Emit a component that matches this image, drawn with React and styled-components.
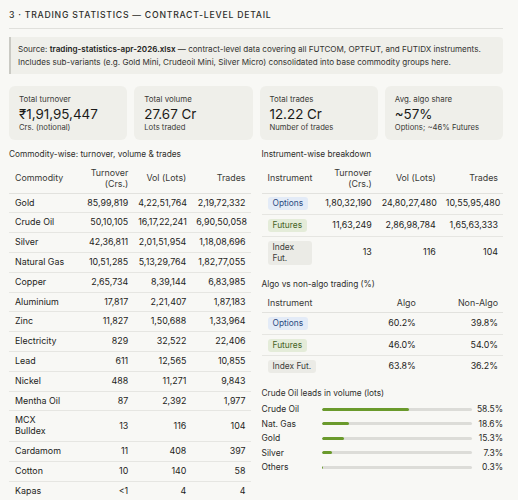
import React from "react";
import styled, { createGlobalStyle } from "styled-components";

const Global = createGlobalStyle`
  html, body { margin: 0; padding: 0; background: #f8f8f5; }
  body { font-family: Inter, "Noto Sans", sans-serif; color: #1d1d1b; -webkit-font-smoothing: antialiased; }
`;

const Page = styled.div`
  width: 494px;
  padding: 9px 15px 0 9px;
`;

const Heading = styled.div`
  font-size: 8.7px;
  font-weight: 500;
  letter-spacing: 0.75px;
  color: #2e2e2b;
  line-height: 12px;
  padding-bottom: 7px;
  border-bottom: 1px solid #e0e0dc;
`;

const SourceBox = styled.div`
  margin-top: 8px;
  background: #efefea;
  border-left: 2px solid #cacac4;
  border-radius: 0 4px 4px 0;
  padding: 6px 8px 5px 7px;
  font-size: 8.1px;
  line-height: 13px;
  color: #333330;
  white-space: nowrap;
  b { font-weight: 600; color: #1d1d1b; }
`;

const Cards = styled.div`
  margin-top: 12px;
  display: grid;
  grid-template-columns: repeat(4, 1fr);
  gap: 7px;
`;

const Card = styled.div`
  background: #efefea;
  border-radius: 6px;
  padding: 8px 10px 7px;
  display: flex;
  flex-direction: column;
`;

const CardLabel = styled.div`
  font-size: 7.9px;
  line-height: 11px;
  color: #3a3a37;
`;

const CardValue = styled.div`
  font-size: 13.4px;
  line-height: 18px;
  color: #1a1a18;
`;

const CardSub = styled.div`
  font-size: 7.7px;
  line-height: 10px;
  color: #3a3a37;
`;

const Columns = styled.div`
  margin-top: 8px;
  display: grid;
  grid-template-columns: 1fr 1fr;
  column-gap: 11px;
  align-items: start;
`;

const Col = styled.div`
  display: flex;
  flex-direction: column;
`;

const SectionTitle = styled.div`
  font-size: 8.3px;
  line-height: 12px;
  color: #2e2e2b;
  margin-top: ${(p) => p.$mt || 0}px;
  margin-bottom: ${(p) => p.$mb || 4}px;
`;

const Table = styled.table`
  width: 100%;
  border-collapse: collapse;
  table-layout: fixed;
  font-size: 8.9px;
  line-height: 10.8px;
`;

const Th = styled.th`
  font-weight: 400;
  color: #3a3a37;
  text-align: ${(p) => (p.$left ? "left" : "right")};
  padding: 4px 5px 3px ${(p) => (p.$left ? 6 : 5)}px;
  border-bottom: 1px solid #e2e2de;
  vertical-align: middle;
`;

const Td = styled.td`
  text-align: ${(p) => (p.$left ? "left" : "right")};
  padding: ${(p) => (p.$tight ? "3.8px" : "4px")} 5px ${(p) => (p.$tight ? "3.8px" : "4px")} ${(p) => (p.$left ? 6 : 5)}px;
  border-bottom: ${(p) => (p.$last ? "none" : "1px solid #e6e6e2")};
  vertical-align: middle;
  color: #1d1d1b;
  white-space: ${(p) => (p.$wrap ? "normal" : "nowrap")};
`;

const badgeColors = {
  blue: { bg: "#e3ebf7", fg: "#2c4a80" },
  green: { bg: "#e4ecd9", fg: "#45621f" },
  gray: { bg: "#ebebe6", fg: "#3d3d3a" },
};

const Badge = styled.span`
  display: inline-block;
  vertical-align: top;
  padding: 1px 5px;
  border-radius: 3px;
  font-size: 8.4px;
  line-height: 11px;
  background: ${(p) => badgeColors[p.$tone].bg};
  color: ${(p) => badgeColors[p.$tone].fg};
`;

const Bars = styled.div`
  display: grid;
  grid-template-columns: 60px 150px 1fr;
  grid-auto-rows: 14.5px;
  align-items: center;
`;

const BarLabel = styled.div`
  font-size: 8.5px;
  color: #2a2a28;
`;

const Track = styled.div`
  height: 3px;
  border-radius: 2px;
  background: #dcdcd8;
  overflow: hidden;
`;

const Fill = styled.div`
  height: 100%;
  border-radius: 2px;
  background: #6a9a2c;
`;

const Pct = styled.div`
  font-size: 8.5px;
  text-align: right;
  color: #2a2a28;
`;

const commodities = [
  ["Gold", "85,99,819", "4,22,51,764", "2,19,72,332"],
  ["Crude Oil", "50,10,105", "16,17,22,241", "6,90,50,058"],
  ["Silver", "42,36,811", "2,01,51,954", "1,18,08,696"],
  ["Natural Gas", "10,51,285", "5,13,29,764", "1,82,77,055"],
  ["Copper", "2,65,734", "8,39,144", "6,83,985"],
  ["Aluminium", "17,817", "2,21,407", "1,87,183"],
  ["Zinc", "11,827", "1,50,688", "1,33,964"],
  ["Electricity", "829", "32,522", "22,406"],
  ["Lead", "611", "12,565", "10,855"],
  ["Nickel", "488", "11,271", "9,843"],
  ["Mentha Oil", "87", "2,392", "1,977"],
  ["MCX Bulldex", "13", "116", "104"],
  ["Cardamom", "11", "408", "397"],
  ["Cotton", "10", "140", "58"],
  ["Kapas", "<1", "4", "4"],
];

const instruments = [
  ["Options", "blue", "1,80,32,190", "24,80,27,480", "10,55,95,480"],
  ["Futures", "green", "11,63,249", "2,86,98,784", "1,65,63,333"],
  ["Index Fut.", "gray", "13", "116", "104"],
];

const algo = [
  ["Options", "blue", "60.2%", "39.8%"],
  ["Futures", "green", "46.0%", "54.0%"],
  ["Index Fut.", "gray", "63.8%", "36.2%"],
];

const bars = [
  ["Crude Oil", 58.5, "58.5%"],
  ["Nat. Gas", 18.6, "18.6%"],
  ["Gold", 15.3, "15.3%"],
  ["Silver", 7.3, "7.3%"],
  ["Others", 0.6, "0.3%"],
];

const stats = [
  ["Total turnover", "₹1,91,95,447", "Crs. (notional)"],
  ["Total volume", "27.67 Cr", "Lots traded"],
  ["Total trades", "12.22 Cr", "Number of trades"],
  ["Avg. algo share", "~57%", "Options; ~46% Futures"],
];

export default function App() {
  return (
    <>
      <Global />
      <Page>
        <Heading>3 · TRADING STATISTICS — CONTRACT-LEVEL DETAIL</Heading>
        <SourceBox>
          Source: <b>trading-statistics-apr-2026.xlsx</b> — contract-level data covering all FUTCOM, OPTFUT, and FUTIDX instruments.
          <br />
          Includes sub-variants (e.g. Gold Mini, Crudeoil Mini, Silver Micro) consolidated into base commodity groups here.
        </SourceBox>
        <Cards>
          {stats.map(([l, v, s]) => (
            <Card key={l}>
              <CardLabel>{l}</CardLabel>
              <CardValue>{v}</CardValue>
              <CardSub>{s}</CardSub>
            </Card>
          ))}
        </Cards>
        <Columns>
          <Col>
            <SectionTitle $mb={4}>Commodity-wise: turnover, volume &amp; trades</SectionTitle>
            <Table>
              <colgroup>
                <col style={{ width: 66 }} />
                <col style={{ width: 58 }} />
                <col style={{ width: 58 }} />
                <col style={{ width: 59 }} />
              </colgroup>
              <thead>
                <tr>
                  <Th $left>Commodity</Th>
                  <Th>Turnover<br />(Crs.)</Th>
                  <Th>Vol (Lots)</Th>
                  <Th>Trades</Th>
                </tr>
              </thead>
              <tbody>
                {commodities.map((r, i) => {
                  const last = i === commodities.length - 1;
                  return (
                    <tr key={r[0]}>
                      <Td $left $wrap $last={last}>
                        {r[0] === "MCX Bulldex" ? <>MCX<br />Bulldex</> : r[0]}
                      </Td>
                      <Td $last={last}>{r[1]}</Td>
                      <Td $last={last}>{r[2]}</Td>
                      <Td $last={last}>{r[3]}</Td>
                    </tr>
                  );
                })}
              </tbody>
            </Table>
          </Col>
          <Col>
            <SectionTitle $mb={4}>Instrument-wise breakdown</SectionTitle>
            <Table>
              <colgroup>
                <col style={{ width: 55 }} />
                <col style={{ width: 60 }} />
                <col style={{ width: 64 }} />
                <col style={{ width: 62 }} />
              </colgroup>
              <thead>
                <tr>
                  <Th $left>Instrument</Th>
                  <Th>Turnover<br />(Crs.)</Th>
                  <Th>Vol (Lots)</Th>
                  <Th>Trades</Th>
                </tr>
              </thead>
              <tbody>
                {instruments.map((r, i) => {
                  const last = i === instruments.length - 1;
                  return (
                    <tr key={r[0]}>
                      <Td $left $wrap $tight $last={last}>
                        <Badge $tone={r[1]}>{r[0]}</Badge>
                      </Td>
                      <Td $tight $last={last}>{r[2]}</Td>
                      <Td $tight $last={last}>{r[3]}</Td>
                      <Td $tight $last={last}>{r[4]}</Td>
                    </tr>
                  );
                })}
              </tbody>
            </Table>
            <SectionTitle $mt={10} $mb={4}>Algo vs non-algo trading (%)</SectionTitle>
            <Table>
              <colgroup>
                <col style={{ width: 79 }} />
                <col style={{ width: 80 }} />
                <col style={{ width: 82 }} />
              </colgroup>
              <thead>
                <tr>
                  <Th $left>Instrument</Th>
                  <Th>Algo</Th>
                  <Th>Non-Algo</Th>
                </tr>
              </thead>
              <tbody>
                {algo.map((r, i) => {
                  const last = i === algo.length - 1;
                  return (
                    <tr key={r[0]}>
                      <Td $left $tight $last={last}>
                        <Badge $tone={r[1]}>{r[0]}</Badge>
                      </Td>
                      <Td $tight $last={last}>{r[2]}</Td>
                      <Td $tight $last={last}>{r[3]}</Td>
                    </tr>
                  );
                })}
              </tbody>
            </Table>
            <SectionTitle $mt={10} $mb={3}>Crude Oil leads in volume (lots)</SectionTitle>
            <Bars>
              {bars.map(([l, w, p]) => (
                <React.Fragment key={l}>
                  <BarLabel>{l}</BarLabel>
                  <Track>
                    <Fill style={{ width: `${w}%` }} />
                  </Track>
                  <Pct>{p}</Pct>
                </React.Fragment>
              ))}
            </Bars>
          </Col>
        </Columns>
      </Page>
    </>
  );
}
